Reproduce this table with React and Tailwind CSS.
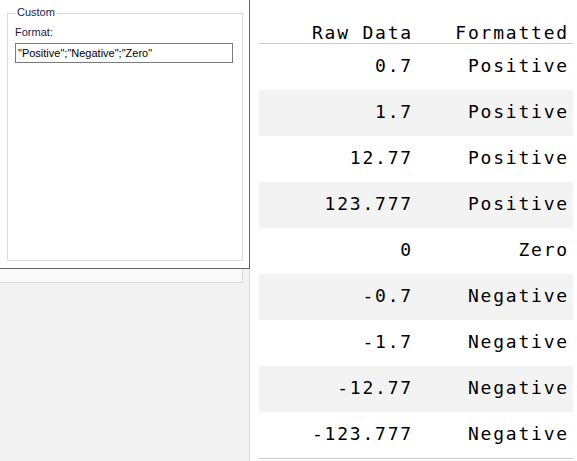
import React from "react";

const rows = [
  ["0.7", "Positive"],
  ["1.7", "Positive"],
  ["12.77", "Positive"],
  ["123.777", "Positive"],
  ["0", "Zero"],
  ["-0.7", "Negative"],
  ["-1.7", "Negative"],
  ["-12.77", "Negative"],
  ["-123.777", "Negative"],
];

export default function App() {
  return (
    <div className="flex w-[577px] h-[461px] bg-white overflow-hidden">
      {/* Left column */}
      <div className="w-[250px] h-full flex flex-col shrink-0">
        <div className="h-[269px] w-[250px] bg-white border-r border-b border-[#646464] pt-[13px] pl-[7px]">
          <div
            className="relative w-[236px] h-[248px] border border-[#dcdcdc] pt-[12px] pl-[7px] text-[11px] leading-[13px] text-[#22204a]"
            style={{ fontFamily: '"Liberation Sans", Arial, sans-serif' }}
          >
            <div className="absolute top-[-8px] left-[8px] bg-white px-[1px]">Custom</div>
            <div>Format:</div>
            <div className="mt-[4px] w-[218px] h-[20px] border border-[#7a7a7a] pl-[2px] flex items-center text-black whitespace-nowrap">
              "Positive";"Negative";"Zero"
            </div>
          </div>
        </div>
        <div className="flex-1 bg-[#f3f3f3] border-r border-[#dcdcdc]">
          <div className="w-[243px] h-[14px] bg-[#f9f9f9] border-r border-b border-[#d9d9d9]" />
        </div>
      </div>

      {/* Table */}
      <div
        className="ml-[9px] w-[314px] text-[18px] tracking-[1.8px] text-black"
        style={{ fontFamily: '"DejaVu Sans Mono", "Liberation Mono", monospace' }}
      >
        <div className="grid grid-cols-[158px_156px] h-[44px] border-b border-[#cccccc] pt-[24px] leading-[18px]">
          <div className="text-right pr-[4px] whitespace-nowrap">Raw Data</div>
          <div className="text-right pr-[4px] whitespace-nowrap">Formatted</div>
        </div>
        {rows.map((r, i) => (
          <div
            key={i}
            className={
              "grid grid-cols-[158px_156px] h-[46px] pt-[13px] leading-[18px] " +
              (i % 2 === 1 ? "bg-[#f3f3f3]" : "bg-white") +
              (i === rows.length - 1 ? " border-b border-[#cccccc] h-[47px]" : "")
            }
          >
            <div className="text-right pr-[4px] whitespace-nowrap">{r[0]}</div>
            <div className="text-right pr-[4px] whitespace-nowrap">{r[1]}</div>
          </div>
        ))}
      </div>
    </div>
  );
}
